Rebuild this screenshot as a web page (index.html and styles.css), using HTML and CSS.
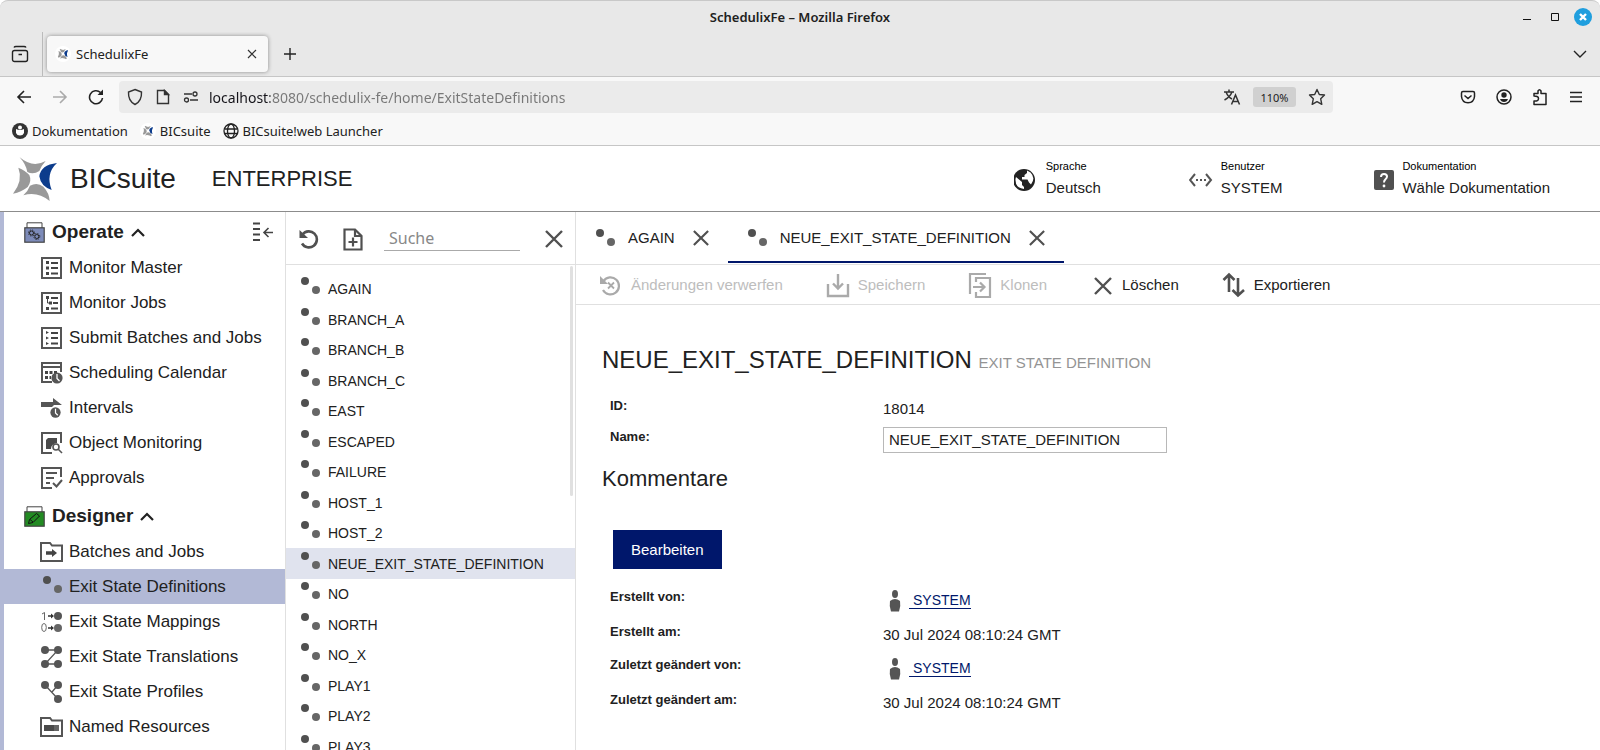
FILE: index.html
```html
<!DOCTYPE html>
<html lang="de">
<head>
    <meta charset="UTF-8">
    <meta name="viewport" content="width=device-width, initial-scale=1.0">
    <title>SchedulixFe</title>
    <link rel="stylesheet" href="styles.css">
</head>
<body>
    <!-- Icons -->
    <svg class="sprite" aria-hidden="true">
        <symbol id="logo" viewBox="39 48 132 132">
            <path fill="#999" d="M59 49Q98 82 137 60Q124 74 118 90Q100 102 82 93Q78 70 59 49Z"/>
            <path fill="#999" d="M55 80Q70 118 39 158Q64 154 83 138Q96 120 88 102Q76 88 55 80Z"/>
            <path fill="#999" d="M70 163Q112 150 149 180Q148 156 130 137Q112 122 90 134Q84 150 70 163Z"/>
            <path fill="#0c3c8c" d="M171 66Q136 98 155 147Q122 136 118 106Q122 72 171 66Z"/>
        </symbol>
        <symbol id="dots" viewBox="0 0 20 20">
            <circle cx="4" cy="5" r="4" fill="#505050"/>
            <circle cx="15" cy="14" r="4" fill="#666"/>
        </symbol>
        <symbol id="cross" viewBox="0 0 18 18">
            <path d="M1 1L17 17M17 1L1 17" fill="none" stroke="#505050" stroke-width="2.4"/>
        </symbol>
        <symbol id="caret" viewBox="0 0 14 9">
            <path d="M1 8L7 2L13 8" fill="none" stroke="#222" stroke-width="2.2"/>
        </symbol>
        <symbol id="person" viewBox="0 0 12 22">
            <ellipse cx="6" cy="4" rx="3" ry="4" fill="#555"/>
            <path d="M1 11Q6 7 11 11Q12 16 10 21.500H2Q0 16 1 11Z" fill="#555"/>
        </symbol>
        <symbol id="folder" viewBox="0 0 23 20">
            <path d="M1 19V1H10L12 3.500H22V19Z" fill="none" stroke="#555" stroke-width="2"/>
        </symbol>
        <symbol id="frame" viewBox="0 0 21 22">
            <path d="M1 1H20V21H1Z" fill="none" stroke="#555" stroke-width="2"/>
        </symbol>
        <symbol id="clock" viewBox="0 0 12 12">
            <circle cx="6" cy="6" r="5.600" fill="#555"/>
            <path d="M6 2V6.500L8.500 9" fill="none" stroke="#fff" stroke-width="1.300"/>
        </symbol>
    </svg>

    <div class="window-title">
        <span class="window-name">SchedulixFe – Mozilla Firefox</span>
        <div class="window-controls">
            <button type="button" aria-label="Minimieren"><svg width="18" height="18"><path d="M5 11.500H13" stroke="#111"/></svg></button>
            <button type="button" aria-label="Maximieren"><svg width="18" height="18"><path d="M5.500 5.500H12.500V12.500H5.500Z" fill="none" stroke="#111"/></svg></button>
            <button type="button" aria-label="Schließen"><svg width="18" height="18"><circle cx="9" cy="9" r="9" fill="#1f9ede"/><path d="M6 6L12 12M12 6L6 12" stroke="#fff" stroke-width="2.400"/></svg></button>
        </div>
    </div>

    <div class="tab-strip">
        <button type="button" class="library" aria-label="Ansicht">
            <svg width="18" height="18" fill="none" stroke="#222" stroke-width="1.400"><rect x="1.500" y="5.500" width="15" height="11" rx="2"/><path d="M3 2.500Q3.500 1.500 5 1.500H13Q14.500 1.500 15 2.500M7.500 9.500H11"/></svg>
        </button>
        <div class="browser-tab">
            <svg class="favicon"><use href="#logo"/></svg>
            <span>SchedulixFe</span>
            <button type="button" aria-label="Tab schließen"><svg width="10" height="10"><path d="M1 1L9 9M9 1L1 9" stroke="#333" stroke-width="1.200"/></svg></button>
        </div>
        <button type="button" class="new-tab" aria-label="Neuer Tab"><svg width="12" height="12"><path d="M6 0V12M0 6H12" stroke="#222" stroke-width="1.400"/></svg></button>
        <button type="button" class="all-tabs" aria-label="Alle Tabs"><svg width="14" height="8"><path d="M1 1L7 7L13 1" fill="none" stroke="#222" stroke-width="1.400"/></svg></button>
    </div>

    <div class="nav-bar">
        <button type="button" aria-label="Zurück"><svg width="16" height="16" fill="none" stroke="#222" stroke-width="1.600"><path d="M15 8H2M8 2L2 8L8 14"/></svg></button>
        <button type="button" aria-label="Vor"><svg width="16" height="16" fill="none" stroke="#aaa" stroke-width="1.600"><path d="M1 8H14M8 2L14 8L8 14"/></svg></button>
        <button type="button" aria-label="Neu laden"><svg width="16" height="16" fill="none" stroke="#222" stroke-width="1.600"><path d="M14.500 9A6.500 6.500 0 1 1 12.500 3.500"/><path d="M9.500 6H15V.5Z" fill="#222" stroke="none"/></svg></button>
        <div class="url-bar">
            <svg width="16" height="18" fill="none" stroke="#333" stroke-width="1.400"><path d="M8 1.500L14.500 4Q15 13 8 16.500Q1 13 1.500 4Z"/></svg>
            <svg width="16" height="16" fill="none" stroke="#333" stroke-width="1.400"><path d="M2.500 1.500H9.500L13.500 5.500V14.500H2.500Z"/><path d="M9.500 1.500V5.500H13.500Z" fill="#333"/></svg>
            <svg width="16" height="16" fill="none" stroke="#333" stroke-width="1.300"><path d="M1 5H9M7 11H15"/><circle cx="12" cy="5" r="2"/><circle cx="3.500" cy="11" r="2"/></svg>
            <input type="text" class="url" value="localhost:8080/schedulix-fe/home/ExitStateDefinitions" aria-label="Adresse">
            <button type="button" aria-label="Übersetzen"><svg width="18" height="16" fill="none" stroke="#333" stroke-width="1.500"><path d="M1 3H11M6 .5V3M9 3Q7 8 1.500 11M3 3Q5 8 9 10M8.500 15.500L12.500 6L16.500 15.500M10 12.500H15"/></svg></button>
            <button type="button" class="zoom-level">110%</button>
            <button type="button" aria-label="Lesezeichen"><svg width="18" height="18" fill="none" stroke="#333" stroke-width="1.400" stroke-linejoin="round"><path d="M9 1.500L11.300 6.500L16.500 7L12.700 10.800L13.800 16.300L9 13.600L4.200 16.300L5.300 10.800L1.500 7L6.700 6.500Z"/></svg></button>
        </div>
        <div class="nav-tools">
            <button type="button" aria-label="Pocket"><svg width="16" height="16" fill="none" stroke="#222" stroke-width="1.500"><path d="M3 2.500H13Q14.500 2.500 14.500 4V7.500Q14 13.500 8 13.800Q2 13.500 1.500 7.500V4Q1.500 2.500 3 2.500ZM4.500 6.500L8 9.500L11.500 6.500"/></svg></button>
            <button type="button" aria-label="Konto"><svg width="16" height="16"><circle cx="8" cy="8" r="7" fill="none" stroke="#222" stroke-width="1.500"/><circle cx="8" cy="6" r="2.700" fill="#222"/><path d="M4 10H12Q11 13 8 13Q5 13 4 10Z" fill="#222"/></svg></button>
            <button type="button" aria-label="Erweiterungen"><svg width="16" height="18" fill="none" stroke="#222" stroke-width="1.500" stroke-linejoin="round"><path d="M2 8V5.500H6V3Q7.500 .5 9 3V5.500H14V16.500H2V13Q6.500 13.500 6.500 10.500Q6.500 8 2 8Z"/></svg></button>
            <button type="button" aria-label="Menü"><svg width="16" height="16"><path d="M2 3.500H14M2 8H14M2 12.500H14" stroke="#222" stroke-width="1.400"/></svg></button>
        </div>
    </div>

    <nav class="bookmarks">
        <a href="#"><svg width="16" height="16"><circle cx="8" cy="8" r="8" fill="#333"/><path d="M4 6Q8 8 12 6V10Q11 12.500 8 12.500Q5 12.500 4 10Z" fill="#fff"/><circle cx="8" cy="4.500" r="2" fill="#fff"/></svg>Dokumentation</a>
        <a href="#"><svg class="favicon"><use href="#logo"/></svg>BICsuite</a>
        <a href="#"><svg width="16" height="16" fill="none" stroke="#222" stroke-width="1.300"><circle cx="8" cy="8" r="7"/><ellipse cx="8" cy="8" rx="3.500" ry="7"/><path d="M1.500 6H14.500M1.500 10.500H14.500"/></svg>BICsuite!web Launcher</a>
    </nav>

    <header class="app-header">
        <svg class="logo"><use href="#logo"/></svg>
        <span class="brand">BICsuite</span>
        <span class="edition">ENTERPRISE</span>
        <div class="header-items">
            <div class="header-item">
                <svg width="24" height="24"><circle cx="10" cy="13" r="11" fill="#222"/><path d="M2 10L8 15V18L10 20V22Q1 21 1.500 12ZM13 3.500L13 6L10.500 8V10H8V12.500H13.500L15 15.500L17 17.500Q22 11 16.500 5.500Z" fill="#fff"/></svg>
                <div><small>Sprache</small><span>Deutsch</span></div>
            </div>
            <div class="header-item">
                <svg width="24" height="24" fill="none" stroke="#555" stroke-width="2"><path d="M6 7L1 13L6 19M17 7L22 13L17 19"/><path d="M7 13H17" stroke-dasharray="2 2"/></svg>
                <div><small>Benutzer</small><span>SYSTEM</span></div>
            </div>
            <div class="header-item">
                <svg width="24" height="24"><rect x="4" y="3" width="20" height="20" rx="2" fill="#505050"/><path d="M11 10Q11 7 14 7Q17 7 17 9.500Q17 11 15.500 12.200Q14 13.500 14 15.500" fill="none" stroke="#fff" stroke-width="2"/><circle cx="14" cy="19" r="1.400" fill="#fff"/></svg>
                <div><small>Dokumentation</small><span>Wähle Dokumentation</span></div>
            </div>
        </div>
    </header>

    <div class="app">
        <nav class="sidebar">
            <section class="group">
                <div class="group-head">
                    <button type="button" class="group-toggle">
                        <svg width="21" height="21"><path d="M3 6V.8H18V6" fill="#fff" stroke="#444" stroke-width="1"/><rect x=".8" y="5.800" width="19.400" height="14.400" fill="#7d8bb9" stroke="#444" stroke-width="1.200"/><g fill="none" stroke="#222"><circle cx="7.500" cy="11" r="2"/><circle cx="7.500" cy="11" r="3" stroke-dasharray="1.200 1.200"/><circle cx="12.800" cy="14.500" r="2"/><circle cx="12.800" cy="14.500" r="3" stroke-dasharray="1.200 1.200"/></g></svg>
                        Operate
                        <svg width="14" height="9"><use href="#caret"/></svg>
                    </button>
                    <button type="button" class="collapse" aria-label="Menü einklappen"><svg width="20" height="20" fill="none" stroke="#444"><path d="M0 1.500H7M0 7H7M0 12.500H7M0 18H7" stroke-width="2"/><path d="M20 10.500H11M15.500 6L11 10.500L15.500 15" stroke-width="1.600"/></svg></button>
                </div>
                <a href="#"><svg width="23" height="22"><use href="#frame" x="1" width="21" height="22"/><path d="M6 5.500H9M6 11H9M6 16.500H9" stroke="#444" stroke-width="3"/><path d="M11 6H18M11 11H18M11 16.500H18" stroke="#444" stroke-width="2"/></svg>Monitor Master</a>
                <a href="#"><svg width="23" height="22"><use href="#frame" x="1" width="21" height="22"/><path d="M6 5.500H9M9 11H12M6 16.500H9" stroke="#444" stroke-width="3"/><path d="M11 6H18M13 11H18M11 16.500H18" stroke="#444" stroke-width="2"/><path d="M7.500 6V11H10" fill="none" stroke="#444"/></svg>Monitor Jobs</a>
                <a href="#"><svg width="23" height="22"><use href="#frame" x="1" width="21" height="22"/><path d="M6 4L9 5.500L6 7ZM6 9.500L9 11L6 12.500ZM6 15L9 16.500L6 18Z" fill="#444"/><path d="M11 6H18M11 11H18M11 16.500H18" stroke="#444" stroke-width="2"/></svg>Submit Batches and Jobs</a>
                <a href="#"><svg width="23" height="22"><path d="M12 20H2V1H21V10M2 5H21" fill="none" stroke="#555" stroke-width="2"/><path d="M5 10.500H8M9.500 10.500H12.500M5 15.500H8M9.500 15.500H11M14 10.500H17" stroke="#444" stroke-width="3"/><use href="#clock" x="11" y="10" width="12" height="12"/></svg>Scheduling Calendar</a>
                <a href="#"><svg width="23" height="22"><path d="M1 5H13V1L22 8H14L12 10H1Z" fill="#555"/><use href="#clock" x="10" y="10" width="11" height="11"/></svg>Intervals</a>
                <a href="#"><svg width="23" height="22"><path d="M12 21H2V1H21V11" fill="none" stroke="#555" stroke-width="2"/><path d="M6 8L8 6H17V11Q11 12 11 17H6Z" fill="#4a4a4a"/><g fill="none" stroke="#555" stroke-width="1.600"><circle cx="16" cy="15" r="3"/><path d="M18 17L22 21"/></g></svg>Object Monitoring</a>
                <a href="#"><svg width="23" height="22" fill="none" stroke="#555" stroke-width="2"><path d="M12 21H2V1H21V10M6 6H17M6 11H14M6 16H10"/><path d="M13 16L16.500 19.500L22 13"/></svg>Approvals</a>
            </section>
            <section class="group">
                <div class="group-head">
                    <button type="button" class="group-toggle">
                        <svg width="21" height="21"><path d="M3 6V.8H18V6" fill="#fff" stroke="#444" stroke-width="1"/><rect x=".8" y="5.800" width="19.400" height="14.400" fill="#228b22" stroke="#444" stroke-width="1.200"/><path d="M4.500 17.500L5.500 13.500L12.500 7.500L15.500 10L9 16.500ZM6 13.500L9 16" fill="none" stroke="#111"/></svg>
                        Designer
                        <svg width="14" height="9"><use href="#caret"/></svg>
                    </button>
                </div>
                <a href="#"><svg width="23" height="20"><use href="#folder"/><path d="M6 11H13" stroke="#444" stroke-width="3.500"/><path d="M12 7L17 11L12 15Z" fill="#444"/></svg>Batches and Jobs</a>
                <a href="#" class="selected"><svg width="23" height="22"><use href="#dots" x="3" y="-1" width="20" height="20"/></svg>Exit State Definitions</a>
                <a href="#"><svg width="23" height="22"><g fill="none" stroke="#666"><path d="M2 3L4.500 1.500V9"/><ellipse cx="4" cy="16.500" rx="2.300" ry="4"/><path d="M8 5H12M8 17H12" stroke="#333" stroke-width="1.500"/></g><path d="M11 2.500L14 5L11 7.500ZM11 14.500L14 17L11 19.500Z" fill="#333"/><circle cx="18" cy="5" r="4" fill="#555"/><circle cx="18" cy="17" r="4" fill="#666"/></svg>Exit State Mappings</a>
                <a href="#"><svg width="23" height="22" fill="#555"><path d="M5 4H18L5 18H18" fill="none" stroke="#555" stroke-width="1.300"/><circle cx="5" cy="4" r="4"/><circle cx="18" cy="4" r="4"/><circle cx="5" cy="18" r="4"/><circle cx="18" cy="18" r="4"/></svg>Exit State Translations</a>
                <a href="#"><svg width="23" height="22" fill="#555"><path d="M5 4L18 18M18 4L12 11" fill="none" stroke="#555" stroke-width="1.300"/><circle cx="5" cy="4" r="4"/><circle cx="18" cy="4" r="4"/><circle cx="18" cy="18" r="4"/></svg>Exit State Profiles</a>
                <a href="#"><svg width="23" height="20"><use href="#folder"/><path d="M4 11H14" stroke="#4a4a4a" stroke-width="6"/><path d="M14 11H19" stroke="#666" stroke-width="6"/></svg>Named Resources</a>
            </section>
        </nav>

        <section class="browse">
            <div class="browse-tools">
                <button type="button" aria-label="Aktualisieren"><svg width="20" height="20"><path d="M3.500 5.500A8 8 0 1 1 3 14.500" fill="none" stroke="#505050" stroke-width="2.600"/><path d="M.5 1V9H9Z" fill="#505050"/></svg></button>
                <button type="button" aria-label="Neu"><svg width="20" height="23" fill="none" stroke="#505050" stroke-width="2.200"><path d="M1.500 1.500H12L18.500 8V21.500H1.500ZM12 1.500V8H18.500M10 9.500V18.500M5.500 14H14.500"/></svg></button>
                <input type="text" class="search" placeholder="Suche" aria-label="Suche">
                <button type="button" aria-label="Suche leeren"><svg width="18" height="18"><use href="#cross"/></svg></button>
            </div>
            <div class="entries">
                <a href="#"><svg><use href="#dots"/></svg>AGAIN</a>
                <a href="#"><svg><use href="#dots"/></svg>BRANCH_A</a>
                <a href="#"><svg><use href="#dots"/></svg>BRANCH_B</a>
                <a href="#"><svg><use href="#dots"/></svg>BRANCH_C</a>
                <a href="#"><svg><use href="#dots"/></svg>EAST</a>
                <a href="#"><svg><use href="#dots"/></svg>ESCAPED</a>
                <a href="#"><svg><use href="#dots"/></svg>FAILURE</a>
                <a href="#"><svg><use href="#dots"/></svg>HOST_1</a>
                <a href="#"><svg><use href="#dots"/></svg>HOST_2</a>
                <a href="#" class="selected"><svg><use href="#dots"/></svg>NEUE_EXIT_STATE_DEFINITION</a>
                <a href="#"><svg><use href="#dots"/></svg>NO</a>
                <a href="#"><svg><use href="#dots"/></svg>NORTH</a>
                <a href="#"><svg><use href="#dots"/></svg>NO_X</a>
                <a href="#"><svg><use href="#dots"/></svg>PLAY1</a>
                <a href="#"><svg><use href="#dots"/></svg>PLAY2</a>
                <a href="#"><svg><use href="#dots"/></svg>PLAY3</a>
                <div class="scroll-thumb"></div>
            </div>
        </section>

        <main class="detail">
            <div class="tabs">
                <div class="tab">
                    <svg width="20" height="20"><use href="#dots"/></svg>
                    <span>AGAIN</span>
                    <button type="button" aria-label="AGAIN schließen"><svg width="16" height="16"><use href="#cross"/></svg></button>
                </div>
                <div class="tab active">
                    <svg width="20" height="20"><use href="#dots"/></svg>
                    <span>NEUE_EXIT_STATE_DEFINITION</span>
                    <button type="button" aria-label="NEUE_EXIT_STATE_DEFINITION schließen"><svg width="16" height="16"><use href="#cross"/></svg></button>
                </div>
            </div>
            <div class="toolbar">
                <button type="button" disabled><svg width="24" height="26" fill="none" stroke="#aaa" stroke-width="2.200"><path d="M4.500 9A8.500 8.500 0 1 1 4 18"/><path d="M1 4V12H9Z" fill="#aaa" stroke="none"/><path d="M9 10.500L15 16.500M15 10.500L9 16.500" stroke-width="1.800"/></svg>Änderungen verwerfen</button>
                <button type="button" disabled><svg width="24" height="26" fill="none" stroke="#aaa" stroke-width="2.400"><path d="M2 12V24H22V12M12 2V16M7 11.500L12 16.500L17 11.500"/></svg>Speichern</button>
                <button type="button" disabled><svg width="24" height="26" fill="none" stroke="#aaa" stroke-width="2.200"><path d="M2 22V2H18M8 10V6H22V25H8V20M5 15H16M12 10.500L16.500 15L12 19.500"/></svg>Klonen</button>
                <button type="button"><svg width="24" height="26"><use href="#cross" x="4" y="5" width="18" height="18"/></svg>Löschen</button>
                <button type="button"><svg width="24" height="26" fill="none" stroke="#505050" stroke-width="2.600"><path d="M7 20V3M1.500 8L7 2.500L12.500 8M16 6V23M10.500 18L16 23.500L22 18"/></svg>Exportieren</button>
            </div>
            <form class="content">
                <h1>NEUE_EXIT_STATE_DEFINITION <small>EXIT STATE DEFINITION</small></h1>
                <div class="row">
                    <b>ID:</b>
                    <span>18014</span>
                </div>
                <div class="row">
                    <label for="name">Name:</label>
                    <input type="text" id="name" value="NEUE_EXIT_STATE_DEFINITION">
                </div>
                <h2>Kommentare</h2>
                <button type="button" class="edit">Bearbeiten</button>
                <div class="row user">
                    <b>Erstellt von:</b>
                    <span><svg width="12" height="22"><use href="#person"/></svg><a href="#">SYSTEM</a></span>
                </div>
                <div class="row date">
                    <b>Erstellt am:</b>
                    <span>30 Jul 2024 08:10:24 GMT</span>
                </div>
                <div class="row user">
                    <b>Zuletzt geändert von:</b>
                    <span><svg width="12" height="22"><use href="#person"/></svg><a href="#">SYSTEM</a></span>
                </div>
                <div class="row date">
                    <b>Zuletzt geändert am:</b>
                    <span>30 Jul 2024 08:10:24 GMT</span>
                </div>
            </form>
        </main>
    </div>
</body>
</html>
```
FILE: styles.css
```css
* {
    box-sizing: border-box;
    margin: 0;
    padding: 0;
}

body {
    display: flex;
    flex-direction: column;
    height: 100vh;
    overflow: hidden;
    background: #fff;
    color: #212121;
    font-family: "Liberation Sans", Arial, sans-serif;
    font-size: 15px;
}

button {
    border: none;
    background: none;
    color: inherit;
    font: inherit;
    cursor: pointer;
}

a {
    color: inherit;
    text-decoration: none;
}

svg {
    display: block;
    flex-shrink: 0;
}

.sprite {
    position: absolute;
    width: 0;
    height: 0;
}

/* Browser window */
.window-title,
.tab-strip,
.nav-bar,
.bookmarks {
    display: flex;
    flex-shrink: 0;
    align-items: center;
    font-family: "Noto Sans", sans-serif;
    font-size: 13px;
}

.window-title {
    position: relative;
    justify-content: center;
    height: 32px;
    border-top: 1px solid #c8c8c8;
    border-radius: 8px 8px 0 0;
    background: #e8e8e8;
}

.window-name {
    font-weight: 600;
}

.window-controls {
    position: absolute;
    right: 8px;
    display: flex;
    gap: 10px;
}

.tab-strip {
    height: 45px;
    border-bottom: 1px solid #c6c6c6;
    background: #e8e8e8;
}

.library {
    display: flex;
    align-items: center;
    width: 43px;
    height: 100%;
    padding-left: 11px;
    border-right: 1px solid #bbb;
}

.browser-tab {
    display: flex;
    align-items: center;
    width: 221px;
    height: 36px;
    margin-left: 4px;
    padding: 0 11px 0 8px;
    border-radius: 4px;
    background: #f8f8f8;
    box-shadow: 0 0 4px rgba(0, 0, 0, 0.4);
}

.browser-tab span {
    flex: 1;
    margin-left: 5px;
}

.favicon {
    width: 16px;
    height: 16px;
    padding: 2px;
    border-radius: 50%;
    background: #fff;
}

.new-tab {
    margin-left: 16px;
}

.all-tabs {
    margin: 0 13px 0 auto;
}

.nav-bar {
    height: 40px;
    padding: 0 16px;
    gap: 20px;
    background: #f8f8f8;
}

.url-bar {
    display: flex;
    flex: 1;
    align-items: center;
    gap: 12px;
    height: 32px;
    margin: 0 107px 0 -5px;
    padding: 0 7px 0 8px;
    border-radius: 4px;
    background: #ebebeb;
}

.url {
    flex: 1;
    min-width: 0;
    margin-left: -2px;
    border: none;
    outline: none;
    background: linear-gradient(to right, #15141a 61px, #777 0);
    -webkit-background-clip: text;
    background-clip: text;
    color: transparent;
    font-family: inherit;
    font-size: 14px;
}

.zoom-level {
    width: 43px;
    height: 20px;
    border-radius: 3px;
    background: #d0d0d0;
    font-size: 11px;
}

.nav-tools {
    display: flex;
    align-items: center;
    gap: 20px;
}

.bookmarks {
    height: 29px;
    padding: 0 12px;
    gap: 12px;
    border-bottom: 1px solid #c6c6c6;
    background: #f8f8f8;
}

.bookmarks a {
    display: flex;
    align-items: center;
    gap: 4px;
}

/* Application header */
.app-header {
    display: flex;
    flex-shrink: 0;
    align-items: center;
    height: 66px;
    padding: 0 50px 0 13px;
    border-bottom: 1px solid #8c8c8c;
}

.logo {
    width: 44px;
    height: 44px;
}

.brand {
    margin-left: 13px;
    font-size: 28px;
}

.edition {
    margin-left: 36px;
    font-size: 22px;
}

.header-items {
    display: flex;
    gap: 88px;
    margin-left: auto;
}

.header-item {
    display: flex;
    align-items: center;
    gap: 8px;
}

.header-item div {
    padding-bottom: 3px;
}

.header-item small,
.header-item span {
    display: block;
    line-height: 22px;
}

.header-item small {
    font-size: 11px;
    color: #000;
}

.app {
    display: grid;
    flex: 1;
    grid-template-columns: 286px 290px 1fr;
    min-height: 0;
}

/* Sidebar */
.sidebar {
    overflow: hidden;
    border-left: 4px solid #b2b9d6;
    border-right: 1px solid #e0e0e0;
}

.group {
    margin-bottom: 1px;
}

.group-head {
    display: flex;
    align-items: center;
    justify-content: space-between;
    height: 38px;
    padding: 2px 12px 0 20px;
}

.group-toggle {
    display: flex;
    align-items: center;
    gap: 7px;
    font-size: 19px;
    font-weight: bold;
}

.group a {
    display: flex;
    align-items: center;
    gap: 6px;
    height: 35px;
    padding-left: 36px;
    font-size: 17px;
}

.group a.selected {
    background: #b2b9d6;
}

/* List of entries */
.browse {
    display: flex;
    flex-direction: column;
    overflow: hidden;
    border-right: 1px solid #e0e0e0;
}

.browse-tools {
    display: flex;
    flex-shrink: 0;
    align-items: center;
    height: 53px;
    padding: 0 12px 0 13px;
    gap: 24px;
    border-bottom: 1px solid #e0e0e0;
}

.browse-tools button {
    padding-top: 2px;
}

.search {
    flex: 1;
    min-width: 0;
    height: 26px;
    margin: 0 1px 0 -3px;
    padding-left: 5px;
    border: none;
    border-bottom: 1px solid #aaa;
    outline: none;
    font-family: "Noto Sans", sans-serif;
    font-size: 16px;
}

.search::placeholder {
    color: #888;
}

.entries {
    position: relative;
    flex: 1;
    padding-top: 9px;
}

.entries a {
    display: flex;
    align-items: center;
    gap: 7px;
    height: 30px;
    padding-left: 15px;
    font-size: 14px;
}

.entries a:nth-child(even) {
    height: 31px;
}

.entries a svg {
    width: 20px;
    height: 20px;
    margin-bottom: 6px;
}

.entries a.selected {
    background: #e0e3ee;
}

.scroll-thumb {
    position: absolute;
    top: 1px;
    right: 2px;
    width: 3px;
    height: 230px;
    border-radius: 2px;
    background: #e0e0e0;
}

/* Detail view */
.detail {
    min-width: 0;
}

.tabs {
    display: flex;
    height: 53px;
    border-bottom: 1px solid #e0e0e0;
}

.tab {
    display: flex;
    align-items: center;
    height: 51px;
    padding: 2px 19px 0 20px;
    border-bottom: 2px solid transparent;
}

.tab span {
    margin: 0 18px 0 12px;
}

.tab.active {
    border-color: #00176b;
}

.toolbar {
    display: flex;
    align-items: center;
    gap: 43px;
    height: 40px;
    padding-left: 23px;
    border-bottom: 1px solid #e0e0e0;
}

.toolbar button {
    display: flex;
    align-items: center;
    gap: 8px;
}

.toolbar button:disabled {
    color: #bdbdbd;
    cursor: default;
}

.content {
    padding: 39px 25px 0 26px;
}

h1 {
    margin-bottom: 15px;
    font-size: 24px;
    font-weight: normal;
    line-height: 32px;
}

h1 small {
    font-size: 15px;
    color: #949494;
}

h2 {
    margin: 9px 0 37px;
    font-size: 22px;
    font-weight: normal;
    line-height: 28px;
}

.row {
    display: grid;
    grid-template-columns: 273px 1fr;
    align-items: start;
    height: 31px;
    margin-left: 8px;
    line-height: 30px;
}

.row b,
.row label {
    font-size: 13px;
    font-weight: bold;
    line-height: 24px;
}

.row input {
    width: 284px;
    height: 26px;
    margin-top: 2px;
    padding: 0 5px;
    border: 1px solid #b8b8b8;
    color: #212121;
    font: inherit;
}

.row.user {
    height: 35px;
}

.row.user span {
    display: flex;
    align-items: center;
    gap: 8px;
    padding: 5px 0 0 6px;
}

.row.user a {
    padding-left: 4px;
    border-bottom: 1px solid #00176b;
    color: #00176b;
    font-size: 14px;
    line-height: 15px;
}

.row.date {
    height: 33px;
}

.edit {
    display: block;
    height: 39px;
    margin: 0 0 16px 11px;
    padding: 0 18px;
    background: #00176b;
    color: #fff;
}
```
